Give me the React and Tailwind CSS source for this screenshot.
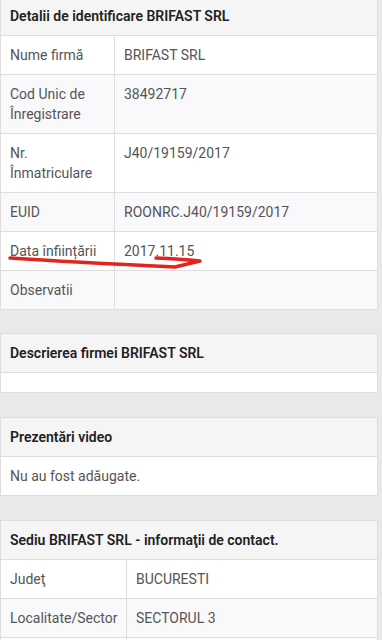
import React from 'react'

const identRows = [
  { label: 'Nume firmă', value: 'BRIFAST SRL' },
  { label: 'Cod Unic de Înregistrare', value: '38492717' },
  { label: 'Nr. Înmatriculare', value: 'J40/19159/2017' },
  { label: 'EUID', value: 'ROONRC.J40/19159/2017' },
  { label: 'Data înființării', value: '2017.11.15' },
  { label: 'Observatii', value: '' },
]

const contactRows = [
  { label: 'Judeţ', value: 'BUCURESTI' },
  { label: 'Localitate/Sector', value: 'SECTORUL 3' },
  { label: '', value: '' },
]

// panel with grey heading, same look as the bootstrap-ish site
const Panel = ({ title, children, className = '' }) => (
  <div className={`border border-[#dddddd] bg-white ${className}`}>
    <div className="bg-[#f5f5f5] border-b border-[#dddddd] px-[9px] py-[9px] leading-5 font-semibold text-[#222]">
      {title}
    </div>
    {children}
  </div>
)

const InfoTable = ({ rows, labelWidth }) => (
  <div>
    {rows.map((row, i) => (
      <div
        key={i}
        className={`flex border-b border-[#dddddd] last:border-b-0 ${i % 2 === 1 ? 'bg-[#f9f9fb]' : 'bg-white'}`}
      >
        <div className={`${labelWidth} shrink-0 border-r border-[#dddddd] px-[9px] py-[9px] leading-5`}>
          {row.label}
        </div>
        <div className="flex-1 px-[9px] py-[9px] leading-5">{row.value}</div>
      </div>
    ))}
  </div>
)

export default function App() {
  return (
    <div
      className="relative h-[640px] overflow-hidden bg-[#e9e9ec] pr-[4px] text-[14px] text-[#555]"
      style={{ fontFamily: 'Roboto, "Liberation Sans", sans-serif' }}
    >
      <div className="-mt-[4px]">
        <Panel title="Detalii de identificare BRIFAST SRL">
          <InfoTable rows={identRows} labelWidth="w-[114px]" />
        </Panel>

        <Panel title="Descrierea firmei BRIFAST SRL" className="mt-[23px]">
          <div className="h-[19px]" />
        </Panel>

        <Panel title="Prezentări video" className="mt-6">
          <div className="px-[9px] py-[9px] leading-5">Nu au fost adăugate.</div>
        </Panel>

        <Panel title="Sediu BRIFAST SRL - informaţii de contact." className="mt-6">
          <InfoTable rows={contactRows} labelWidth="w-[126px]" />
        </Panel>
      </div>

      {/* red marker scribble under the founding date */}
      <svg className="pointer-events-none absolute left-0 top-0" width="382" height="640">
        <path
          d="M10 258 Q70 262 175 267 L200 261 Q180 259 156 258"
          fill="none"
          stroke="#e3241d"
          strokeWidth="3.5"
          strokeLinecap="round"
          strokeLinejoin="round"
        />
      </svg>
    </div>
  )
}
